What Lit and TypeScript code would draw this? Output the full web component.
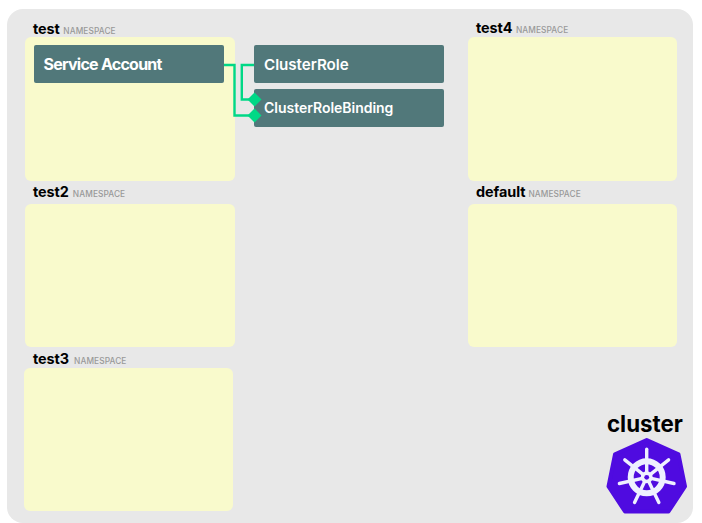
import { LitElement, html, css, svg } from "lit";
import { customElement } from "lit/decorators.js";

const F = (a: number) => (a * Math.PI) / 180;
const spokes = [0, 1, 2, 3, 4, 5, 6].map((i) => {
  const a = F((360 / 7) * i);
  return { x: Math.sin(a), y: -Math.cos(a) };
});

const namespaces = [
  { name: "test", x: 25, y: 37, w: 210, h: 144, labelX: 33, labelY: 20, gap: 3.5 },
  { name: "test2", x: 25, y: 204, w: 210, h: 143, labelX: 33, labelY: 183, gap: 4 },
  { name: "test3", x: 24, y: 368, w: 209, h: 143, labelX: 33, labelY: 350, gap: 5 },
  { name: "test4", x: 468, y: 37, w: 209, h: 144, labelX: 476, labelY: 19, gap: 3.5 },
  { name: "default", x: 468, y: 204, w: 209, h: 143, labelX: 476, labelY: 183, gap: 3 },
];
const resources = [
  { name: "Service Account", x: 34, y: 45, w: 190, cls: "big" },
  { name: "ClusterRole", x: 254, y: 45, w: 190, cls: "mid" },
  { name: "ClusterRoleBinding", x: 254, y: 89, w: 190, cls: "small" },
];

@customElement("app-root")
export class AppRoot extends LitElement {
  static styles = css`
    :host { display: block; width: 702px; height: 523px; background: #fff; font-family: Inter, "Noto Sans", sans-serif; overflow: hidden; }
    .canvas { position: relative; width: 702px; height: 523px; }
    .cluster { position: absolute; left: 7px; top: 9px; width: 686px; height: 514px; background: #e8e8e8; border-radius: 16px; }
    .ns { position: absolute; background: #f9facc; border-radius: 6px; }
    .label { position: absolute; display: flex; align-items: baseline; height: 17px; line-height: 17px; white-space: nowrap; }
    .label b { font-size: 14.400px; font-weight: 700; color: #000; letter-spacing: -0.050px; }
    .label span { font-size: 8.300px; font-weight: 500; color: #999; letter-spacing: 0.1px; }
    .res { position: absolute; height: 38px; box-sizing: border-box; background: #51787a; border-radius: 2px; color: #fff; display: flex; align-items: center; padding-left: 10px; font-size: 14px; font-weight: 600; letter-spacing: -0.020px; }
    .res.small { padding-bottom: 2px; }
    .res.mid { font-size: 15.200px; letter-spacing: -0.050px; }
    .res.big { font-size: 16px; letter-spacing: -0.750px; font-weight: 700; padding-left: 9.500px; }
    svg { position: absolute; left: 0; top: 0; }
    .title { position: absolute; left: 607px; top: 411px; font-size: 22.300px; line-height: 26px; font-weight: 700; color: #000; }
  `;

  render() {
    const cx = 646.7, cy = 477.3;
    return html`<div class="canvas">
      <div class="cluster"></div>
      ${namespaces.map((n) => html`
        <div class="label" style="left:${n.labelX}px;top:${n.labelY}px;gap:${n.gap}px"><b>${n.name}</b><span>NAMESPACE</span></div>
        <div class="ns" style="left:${n.x}px;top:${n.y}px;width:${n.w}px;height:${n.h}px"></div>`)}
      ${resources.map((r) => html`
        <div class="res ${r.cls}" style="left:${r.x}px;top:${r.y}px;width:${r.w}px">${r.name}</div>`)}
      <svg width="702" height="523" viewBox="0 0 702 523">
        <path d="M224 65H234.500V115.500H250" fill="none" stroke="#00d886" stroke-width="2.400"/>
        <path d="M254 65H241.800V99.500H250" fill="none" stroke="#00d886" stroke-width="2.400"/>
        <path d="M254.500 92.500L261.500 99.500L254.500 106.500L247.500 99.500Z" fill="#00d886"/>
        <path d="M254.500 108.500L261.500 115.500L254.500 122.500L247.500 115.500Z" fill="#00d886"/>
        <path d="M646.700 440L678.500 454.300L685 486.500L668.500 511.500H625L608.500 486.500L615 454.300Z" fill="#4f0be0" stroke="#4f0be0" stroke-width="4" stroke-linejoin="round"/>
        <circle cx=${cx} cy=${cy} r="16" fill="none" stroke="#eef0ff" stroke-width="6"/>
        ${spokes.map((s) => svg`<line x1=${cx} y1=${cy} x2=${cx + s.x * 28} y2=${cy + s.y * 28} stroke="#eef0ff" stroke-width="3.400" stroke-linecap="round"/>`)}
        <circle cx=${cx} cy=${cy} r="6" fill="#eef0ff"/>
        <circle cx=${cx} cy=${cy} r="2.400" fill="#4f0be0"/>
      </svg>
      <div class="title">cluster</div>
    </div>`;
  }
}
